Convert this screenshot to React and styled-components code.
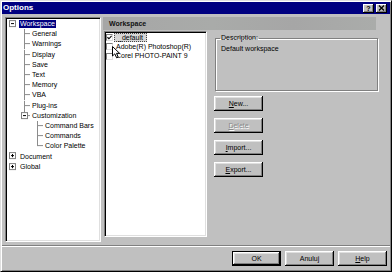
import React from 'react';
import styled, { createGlobalStyle, css } from 'styled-components';

const GlobalStyle = createGlobalStyle`
  html, body { margin: 0; padding: 0; background: #c0c0c0; }
  body { font-family: "Liberation Sans", Arial, sans-serif; font-size: 7px; color: #000; }
  * { box-sizing: border-box; }
`;

const Window = styled.div`
  width: 392px;
  height: 272px;
  background: #c0c0c0;
  border: 1px solid;
  border-color: #dfdfdf #000 #000 #dfdfdf;
  box-shadow: inset 1px 1px #fff, inset -1px -1px #808080;
  padding: 1px;
  display: flex;
  flex-direction: column;
`;

const TitleBar = styled.div`
  height: 12px;
  background: #000080;
  display: flex;
  align-items: center;
  padding: 0 3px 0 1px;
`;

const Title = styled.span`
  flex: 1;
  color: #fff;
  font-weight: bold;
  font-size: 8px;
  line-height: 10px;
`;

const TitleButton = styled.button`
  width: 11px;
  height: 9px;
  padding: 0;
  margin-left: 2px;
  border: none;
  background: #c0c0c0;
  box-shadow: inset -1px -1px #000, inset 1px 1px #fff, inset -2px -2px #808080;
  display: flex;
  align-items: center;
  justify-content: center;
  font-family: "Liberation Sans", Arial, sans-serif;
  font-weight: bold;
  font-size: 7px;
  line-height: 7px;
  color: #000;
`;

const Main = styled.div`
  display: flex;
  margin-top: 3px;
  padding-left: 3px;
  height: 225px;
`;

const sunken = css`
  background: #fff;
  border: 1px solid;
  border-color: #808080 #fff #fff #808080;
  box-shadow: inset 1px 1px #000, inset -1px -1px #dfdfdf;
`;

const Tree = styled.div`
  ${sunken};
  width: 96px;
  height: 225px;
  padding: 1px;
`;

const TreeRow = styled.div`
  display: flex;
  align-items: center;
  height: 10.2px;
`;

const TreeLabel = styled.span`
  padding: 0 1px;
  line-height: 8px;
  white-space: nowrap;
  ${p => p.$selected && css`
    background: #000080;
    color: #fff;
  `}
`;

const ConnectorSvg = styled.svg`
  flex: none;
  display: block;
  overflow: visible;
`;

const LINE = '#8c8c8c';

function Connector({ kind, sign, last }) {
  const h = 10.2;
  const mid = 5.1;
  if (kind === 'root') {
    return (
      <ConnectorSvg width="12" height={h}>
        <rect x="2.5" y="1.6" width="6" height="6" fill="#fff" stroke="#808080" />
        <line x1="4" y1="4.6" x2="7" y2="4.6" stroke="#000" />
        {sign === '+' && <line x1="5.5" y1="3" x2="5.5" y2="6.2" stroke="#000" />}
      </ConnectorSvg>
    );
  }
  if (kind === 'l1') {
    return (
      <ConnectorSvg width="24" height={h}>
        <line x1="17.5" y1="0" x2="17.5" y2={last ? mid : h} stroke={LINE} />
        <line x1="17.5" y1={mid - 0.5} x2="23" y2={mid - 0.5} stroke={LINE} />
      </ConnectorSvg>
    );
  }
  if (kind === 'l1box') {
    return (
      <ConnectorSvg width="24" height={h}>
        <line x1="17.5" y1="0" x2="17.5" y2="2" stroke={LINE} />
        <rect x="14.5" y="1.6" width="6" height="6" fill="#fff" stroke="#808080" />
        <line x1="16" y1="4.6" x2="19" y2="4.6" stroke="#000" />
        <line x1="21" y1="4.6" x2="23" y2="4.6" stroke={LINE} />
      </ConnectorSvg>
    );
  }
  return (
    <ConnectorSvg width="37" height={h}>
      <line x1="30.5" y1="0" x2="30.5" y2={last ? mid : h} stroke={LINE} />
      <line x1="30.5" y1={mid - 0.5} x2="36" y2={mid - 0.5} stroke={LINE} />
    </ConnectorSvg>
  );
}

const treeData = [
  { label: 'Workspace', kind: 'root', sign: '-', selected: true },
  { label: 'General', kind: 'l1' },
  { label: 'Warnings', kind: 'l1' },
  { label: 'Display', kind: 'l1' },
  { label: 'Save', kind: 'l1' },
  { label: 'Text', kind: 'l1' },
  { label: 'Memory', kind: 'l1' },
  { label: 'VBA', kind: 'l1' },
  { label: 'Plug-ins', kind: 'l1' },
  { label: 'Customization', kind: 'l1box' },
  { label: 'Command Bars', kind: 'l2' },
  { label: 'Commands', kind: 'l2' },
  { label: 'Color Palette', kind: 'l2', last: true },
  { label: 'Document', kind: 'root', sign: '+' },
  { label: 'Global', kind: 'root', sign: '+' },
];

const Right = styled.div`
  display: flex;
  flex-direction: column;
  margin-left: 2px;
  width: 276px;
`;

const Band = styled.div`
  width: 273px;
  height: 13px;
  background: linear-gradient(to right, #a6a6a6, #a9aba9 40%, #a6a6a6 70%, #aaacaa);
  display: flex;
  align-items: center;
  padding-left: 6px;
  font-weight: bold;
  font-size: 7px;
  color: #111;
`;

const Body = styled.div`
  display: flex;
  margin-top: 1px;
  padding-left: 1px;
`;

const List = styled.div`
  ${sunken};
  position: relative;
  width: 103px;
  height: 206px;
  padding: 1px 0 0 1px;
`;

const ListRow = styled.div`
  display: flex;
  align-items: center;
  height: 9.3px;
`;

const Check = styled.span`
  flex: none;
  width: 7px;
  height: 7px;
  background: #fff;
  border: 1px solid;
  border-color: #808080 #dfdfdf #dfdfdf #808080;
  display: flex;
  align-items: center;
  justify-content: center;
`;

const ListLabel = styled.span`
  margin-left: 1px;
  padding: 0 2px;
  line-height: 8px;
  white-space: nowrap;
  color: #000;
  ${p => p.$selected && css`
    padding: 0 3px;
    line-height: 9px;
    background: #d6d6d6;
    border: 1px dotted #444;
    line-height: 7px;
  `}
`;

const Cursor = styled.svg`
  position: absolute;
  left: 7px;
  top: 14px;
`;

const Column = styled.div`
  display: flex;
  flex-direction: column;
  margin-left: 6px;
  padding-top: 3px;
`;

const GroupBox = styled.fieldset`
  margin: 0 0 0 2px;
  width: 163px;
  height: 57px;
  padding: 3px 0 0 4px;
  border: 1px solid #808080;
  box-shadow: 1px 1px 0 #fff, inset 1px 1px 0 #fff;
  min-inline-size: 0;
`;

const Legend = styled.legend`
  padding: 0 1px;
  line-height: 8px;
  font-size: 7px;
`;

const GroupText = styled.div`
  padding-left: 1px;
  line-height: 8px;
`;

const ButtonStack = styled.div`
  display: flex;
  flex-direction: column;
  gap: 7px;
  margin: 5px 0 0 1px;
`;

const Button = styled.button`
  width: 49px;
  height: 15px;
  padding: 0;
  background: #c0c0c0;
  font-family: "Liberation Sans", Arial, sans-serif;
  font-size: 7px;
  color: #000;
  border: none;
  box-shadow: inset -1px -1px #000, inset 1px 1px #fff, inset -2px -2px #808080, inset 2px 2px #dfdfdf;
  ${p => p.$default && css`
    border: 1px solid #000;
  `}
  ${p => p.disabled && css`
    color: #8a8a8a;
    text-shadow: 1px 1px 0 #fff;
  `}
`;

const Separator = styled.div`
  margin-top: 3px;
  height: 2px;
  border-top: 1px solid #808080;
  border-bottom: 1px solid #fff;
`;

const Footer = styled.div`
  display: flex;
  justify-content: flex-end;
  gap: 4px;
  margin-top: 4px;
  padding-right: 3px;
`;

export default function App() {
  return (
    <>
      <GlobalStyle />
      <Window>
        <TitleBar>
          <Title>Options</Title>
          <TitleButton>?</TitleButton>
          <TitleButton>
            <svg width="7" height="6" viewBox="0 0 7 6">
              <path d="M1 0.5 L6 5.5 M6 0.5 L1 5.5" stroke="#000" strokeWidth="1.4" />
            </svg>
          </TitleButton>
        </TitleBar>
        <Main>
          <Tree>
            {treeData.map(item => (
              <TreeRow key={item.label}>
                <Connector kind={item.kind} sign={item.sign} last={item.last} />
                <TreeLabel $selected={item.selected}>{item.label}</TreeLabel>
              </TreeRow>
            ))}
          </Tree>
          <Right>
            <Band>Workspace</Band>
            <Body>
              <List>
                <ListRow>
                  <Check>
                    <svg width="6" height="5" viewBox="0 0 6 5">
                      <path d="M0.5 2.2 L2.3 4 L5.5 0.6" stroke="#000" strokeWidth="1.3" fill="none" />
                    </svg>
                  </Check>
                  <ListLabel $selected>_default</ListLabel>
                </ListRow>
                <ListRow>
                  <Check />
                  <ListLabel>Adobe(R) Photoshop(R)</ListLabel>
                </ListRow>
                <ListRow>
                  <Check />
                  <ListLabel>Corel PHOTO-PAINT 9</ListLabel>
                </ListRow>
                <Cursor width="9" height="13" viewBox="0 0 9 13">
                  <path d="M0.5 0.5 L0.5 10 L2.8 7.8 L4.6 11.8 L6.2 11.1 L4.5 7.3 L7.6 7.3 Z" fill="#fff" stroke="#000" strokeWidth="1" />
                </Cursor>
              </List>
              <Column>
                <GroupBox>
                  <Legend>Description:</Legend>
                  <GroupText>Default workspace</GroupText>
                </GroupBox>
                <ButtonStack>
                  <Button><u>N</u>ew...</Button>
                  <Button disabled><u>D</u>elete</Button>
                  <Button><u>I</u>mport...</Button>
                  <Button><u>E</u>xport...</Button>
                </ButtonStack>
              </Column>
            </Body>
          </Right>
        </Main>
        <Separator />
        <Footer>
          <Button $default>OK</Button>
          <Button>Anuluj</Button>
          <Button><u>H</u>elp</Button>
        </Footer>
      </Window>
    </>
  );
}
